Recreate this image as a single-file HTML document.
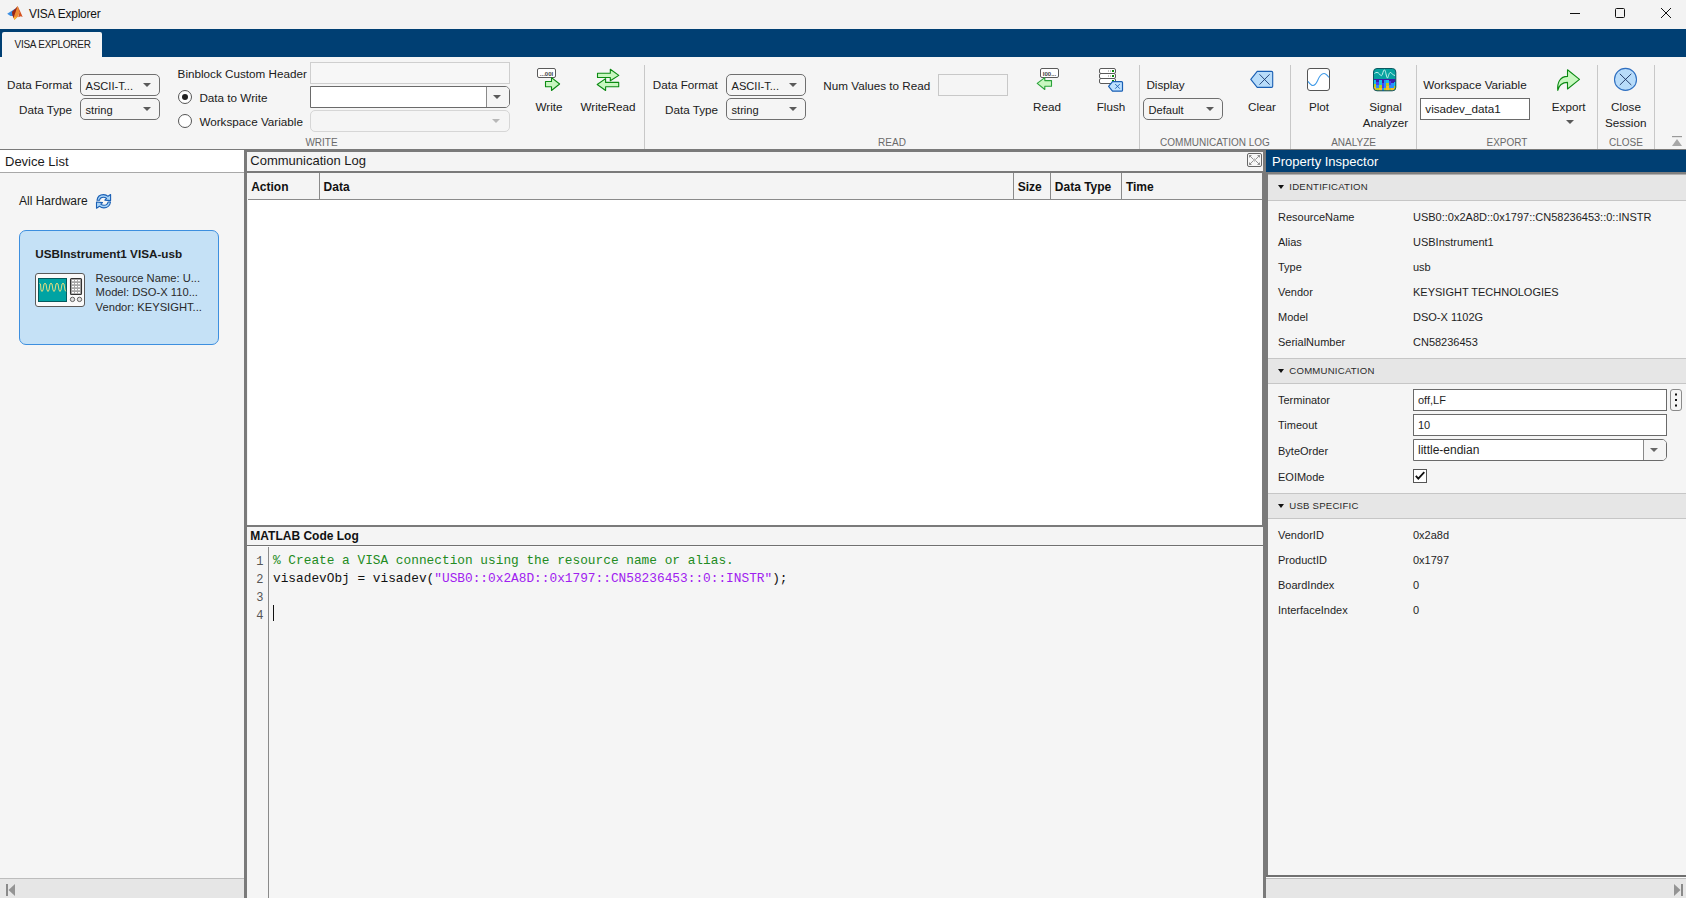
<!DOCTYPE html>
<html><head><meta charset="utf-8">
<style>
*{box-sizing:border-box;margin:0;padding:0}
html,body{width:1686px;height:898px;overflow:hidden;background:#f5f5f5;font-family:"Liberation Sans",sans-serif;color:#1a1a1a}
.a{position:absolute}
.t{position:absolute;white-space:nowrap;line-height:1}
.lbl{font-size:11.7px;color:#202020}
.sec{font-size:10px;color:#6a6a6a;letter-spacing:0}
.dd{position:absolute;height:22px;border:1px solid #6f6f6f;border-radius:5px;background:#f5f5f5}
.dd .v{position:absolute;left:4.5px;top:5.7px;font-size:11.1px;line-height:1;color:#202020;white-space:nowrap}
.arr{position:absolute;width:0;height:0;border-left:4px solid transparent;border-right:4px solid transparent;border-top:4px solid #5a5a5a}
.sep{position:absolute;top:65px;height:84px;width:1px;background:#c8c8c8}
.pil{position:absolute;left:1278px;font-size:11px;color:#1e1e1e;white-space:nowrap;line-height:1}
.piv{position:absolute;left:1413px;font-size:11px;color:#1e1e1e;white-space:nowrap;line-height:1}
.sech{position:absolute;left:1268px;width:418px;height:26px;background:#e6e6e6;border-top:1px solid #c6c6c6;border-bottom:1px solid #c6c6c6}
.sech .tri{position:absolute;left:9.6px;top:9.8px;width:0;height:0;border-left:3.8px solid transparent;border-right:3.8px solid transparent;border-top:4.6px solid #111}
.sech .st{position:absolute;left:21.3px;top:7.2px;font-size:9.6px;letter-spacing:0.22px;color:#2a2a2a;white-space:nowrap;line-height:1}
.code{position:absolute;left:273px;font-family:"Liberation Mono",monospace;font-size:12.8px;white-space:pre;line-height:1;color:#111}
.ln{position:absolute;left:249px;width:14.5px;text-align:right;font-family:"Liberation Mono",monospace;font-size:12px;line-height:1;color:#555}
</style></head><body>

<!-- TITLE BAR -->
<div class="a" style="left:0;top:0;width:1686px;height:29px;background:#f3f3f3"></div>
<div class="t" style="left:29px;top:8.6px;font-size:11.9px;letter-spacing:-0.2px;color:#111">VISA Explorer</div>

<!-- TAB BAR -->
<div class="a" style="left:0;top:29px;width:1686px;height:28px;background:#003f73"></div>
<div class="a" style="left:2px;top:32px;width:100px;height:25px;background:#f5f5f5;border-radius:2px 2px 0 0"></div>
<div class="t" style="left:14.5px;top:40px;font-size:10px;letter-spacing:-0.25px;color:#202020">VISA EXPLORER</div>


<!-- RIBBON CONTENT -->
<!-- title icon + controls -->
<svg class="a" style="left:0;top:0" width="30" height="29" viewBox="0 0 30 29">
 <path d="M7.2,13.8 L11.5,11 L15.8,8.2 L13.2,16 L10.5,16 Z" fill="#3a8ee2"/>
 <path d="M12,11.8 L15.8,8.2 L17.6,6 L16.8,10.5 L14.8,16 L13.6,18.5 L12.3,15 Z" fill="#9b2614"/>
 <path d="M17.6,6 L18.8,9 L19.5,13 L17.8,16.8 L14.4,19.9 L13.6,17.5 L15.6,12 Z" fill="#ec8a34"/>
 <path d="M17.6,6 L20.5,12 L22.7,17 L20.8,16.3 L18.2,17.3 L19.4,12.5 Z" fill="#d5521f"/>
 <path d="M13.8,17.2 L16.8,16.8 L14.4,19.9 Z" fill="#f9b92c"/>
</svg>
<div class="a" style="left:1570px;top:13px;width:10px;height:1px;background:#111"></div>
<div class="a" style="left:1615px;top:8px;width:10px;height:10px;border:1px solid #111;border-radius:1.5px"></div>
<svg class="a" style="left:1660px;top:7px" width="12" height="12" viewBox="0 0 12 12"><path d="M1,1 L11,11 M11,1 L1,11" stroke="#111" stroke-width="1"/></svg>

<!-- WRITE section -->
<div class="t lbl" style="left:7px;top:79.3px">Data Format</div>
<div class="t lbl" style="left:0;width:72px;text-align:right;top:103.8px">Data Type</div>
<div class="dd" style="left:80px;top:74px;width:80px"><span class="v">ASCII-T...</span><i class="arr" style="left:62px;top:8.3px"></i></div>
<div class="dd" style="left:80px;top:98px;width:80px"><span class="v">string</span><i class="arr" style="left:62px;top:8.3px"></i></div>

<div class="t lbl" style="left:177.6px;top:68.1px">Binblock Custom Header</div>
<div class="a" style="left:310px;top:62px;width:200px;height:22px;border:1px solid #cfcfcf;background:#f7f7f7"></div>
<div class="a" style="left:178px;top:90px;width:14px;height:14px;border:1px solid #555;border-radius:50%;background:#fff"></div>
<div class="a" style="left:182px;top:94px;width:6px;height:6px;border-radius:50%;background:#222"></div>
<div class="t lbl" style="left:199.4px;top:92.1px">Data to Write</div>
<div class="a" style="left:310px;top:86px;width:200px;height:22px;border:1px solid #6a6a6a;border-radius:0 5px 5px 0;background:#fff"></div>
<div class="a" style="left:486px;top:87px;width:23px;height:20px;border-left:1px solid #8a8a8a;border-radius:0 4px 4px 0;background:#f5f5f5"></div>
<i class="arr" style="left:493px;top:95px"></i>
<div class="a" style="left:178px;top:114px;width:14px;height:14px;border:1px solid #555;border-radius:50%;background:#fff"></div>
<div class="t lbl" style="left:199.4px;top:116.1px">Workspace Variable</div>
<div class="a" style="left:310px;top:110px;width:200px;height:22px;border:1px solid #d6d6d6;border-radius:5px;background:#f5f5f5"></div>
<i class="arr" style="left:492px;top:119px;border-top-color:#b8b8b8"></i>
<div class="t sec" style="left:221.5px;width:200px;text-align:center;top:138.2px">WRITE</div>

<svg class="a" style="left:530px;top:62px" width="40" height="32" viewBox="530 62 40 32">
 <rect x="537.5" y="68.5" width="18" height="9" rx="1.5" fill="#fff" stroke="#5a5a5a" stroke-width="1"/>
 <text x="546.5" y="75.8" font-family="Liberation Sans" font-size="6" font-weight="700" text-anchor="middle" fill="#444">...00I</text>
 <path d="M545.5,81.5 L551.5,81.5 L551.5,77.6 L559.6,84 L551.5,90.5 L551.5,86.7 L545.5,86.7 Z" fill="#c8f7c0" stroke="#0b8a12" stroke-width="1.1" stroke-linejoin="round"/>
</svg>
<div class="t lbl" style="left:499px;width:100px;text-align:center;top:100.9px">Write</div>
<svg class="a" style="left:592px;top:62px" width="32" height="32" viewBox="592 62 32 32">
 <path d="M597.5,73.2 L610.3,73.2 L610.3,69.2 L618.8,75.4 L610.3,80.8 L610.3,77.5 L597.5,77.5 Z" fill="#c8f7c0" stroke="#0b8a12" stroke-width="1.1" stroke-linejoin="round"/>
 <path d="M618.7,82.4 L605.6,82.4 L605.6,78.6 L597.2,84.5 L605.6,90.5 L605.6,86.7 L618.7,86.7 Z" fill="#c8f7c0" stroke="#0b8a12" stroke-width="1.1" stroke-linejoin="round"/>
</svg>
<div class="t lbl" style="left:558px;width:100px;text-align:center;top:100.9px">WriteRead</div>
<div class="sep" style="left:644px"></div>

<!-- READ section -->
<div class="t lbl" style="left:652.8px;top:79.3px">Data Format</div>
<div class="t lbl" style="left:618px;width:100px;text-align:right;top:103.8px">Data Type</div>
<div class="dd" style="left:726px;top:74px;width:80px"><span class="v">ASCII-T...</span><i class="arr" style="left:62px;top:8.3px"></i></div>
<div class="dd" style="left:726px;top:98px;width:80px"><span class="v">string</span><i class="arr" style="left:62px;top:8.3px"></i></div>
<div class="t lbl" style="left:823.3px;top:80.1px">Num Values to Read</div>
<div class="a" style="left:938px;top:74px;width:70px;height:22px;border:1px solid #c8c8c8;background:#f5f5f5"></div>
<div class="t sec" style="left:792.0px;width:200px;text-align:center;top:138.2px">READ</div>
<svg class="a" style="left:1032px;top:62px" width="32" height="32" viewBox="1032 62 32 32">
 <rect x="1040.5" y="68.5" width="18" height="9" rx="1.5" fill="#fff" stroke="#5a5a5a" stroke-width="1"/>
 <text x="1049.5" y="75.8" font-family="Liberation Sans" font-size="6" font-weight="700" text-anchor="middle" fill="#444">I00...</text>
 <path d="M1051.5,80.6 L1044.8,80.6 L1044.8,77.6 L1037.2,83.4 L1044.8,89.5 L1044.8,86.2 L1051.5,86.2 Z" fill="#c8f7c0" stroke="#2aa33a" stroke-width="1.1" stroke-linejoin="round"/>
</svg>
<div class="t lbl" style="left:997px;width:100px;text-align:center;top:100.9px">Read</div>
<svg class="a" style="left:1095px;top:62px" width="32" height="32" viewBox="1095 62 32 32">
 <rect x="1099.5" y="68.5" width="16" height="5" rx="1.5" fill="#fff" stroke="#5a5a5a"/>
 <rect x="1099.5" y="73.5" width="16" height="5" rx="1.5" fill="#fff" stroke="#5a5a5a"/>
 <rect x="1099.5" y="78.5" width="16" height="5" rx="1.5" fill="#fff" stroke="#5a5a5a"/>
 <rect x="1112" y="70" width="2" height="2" fill="#0a8a0a"/><rect x="1112" y="75" width="2" height="2" fill="#0a8a0a"/><rect x="1112" y="80" width="2" height="2" fill="#0a8a0a"/>
 <rect x="1108" y="70.5" width="1" height="1" fill="#888"/><rect x="1110" y="70.5" width="1" height="1" fill="#888"/>
 <rect x="1108" y="75.5" width="1" height="1" fill="#888"/><rect x="1110" y="75.5" width="1" height="1" fill="#888"/>
 <path d="M1108.6,86.4 L1112.5,81.6 L1121.5,81.6 Q1122.5,81.6 1122.5,82.6 L1122.5,90.2 Q1122.5,91.2 1121.5,91.2 L1112.5,91.2 Z" fill="#bde0ff" stroke="#1a5fb4" stroke-width="1.2" stroke-linejoin="round"/>
 <path d="M1115.2,84 L1119.8,88.7 M1119.8,84 L1115.2,88.7" stroke="#1a5fb4" stroke-width="0.9"/>
</svg>
<div class="t lbl" style="left:1061px;width:100px;text-align:center;top:100.9px">Flush</div>
<div class="sep" style="left:1139px"></div>

<!-- COMM LOG section -->
<div class="t lbl" style="left:1146.4px;top:79.3px">Display</div>
<div class="dd" style="left:1143px;top:98px;width:80px"><span class="v">Default</span><i class="arr" style="left:62px;top:8.3px"></i></div>
<svg class="a" style="left:1246px;top:64px" width="32" height="30" viewBox="1246 64 32 30">
 <path d="M1250.8,79.4 L1257.2,71.4 L1271.5,71.4 Q1272.7,71.4 1272.7,72.6 L1272.7,86.2 Q1272.7,87.4 1271.5,87.4 L1257.2,87.4 Z" fill="#b8dcfa" stroke="#1a5fb4" stroke-width="1.1" stroke-linejoin="round"/>
 <path d="M1259.5,74.3 L1269.6,84.6 M1269.6,74.3 L1259.5,84.6" stroke="#1a3a70" stroke-width="0.9"/>
</svg>
<div class="t lbl" style="left:1212px;width:100px;text-align:center;top:101.1px">Clear</div>
<div class="t sec" style="left:1115.0px;width:200px;text-align:center;top:138.2px">COMMUNICATION LOG</div>
<div class="sep" style="left:1290px"></div>

<!-- ANALYZE -->
<svg class="a" style="left:1302px;top:64px" width="32" height="30" viewBox="1302 64 32 30">
 <rect x="1307.5" y="68.5" width="22" height="22" rx="2.5" fill="#fff" stroke="#555" stroke-width="1"/>
 <path d="M1308,81.3 C1310,84 1311.5,85.5 1313,85.5 C1315,85.5 1316.5,83 1317.5,80.8 C1319,77 1321,73.5 1324,73.5 C1326,73.5 1327.5,75.5 1329,77.5" fill="none" stroke="#3f9ae8" stroke-width="1.1"/>
</svg>
<div class="t lbl" style="left:1269px;width:100px;text-align:center;top:101.1px">Plot</div>
<svg class="a" style="left:1368px;top:64px" width="32" height="30" viewBox="1368 64 32 30">
 <defs><clipPath id="sa"><rect x="1373.5" y="68.5" width="22.3" height="22.3" rx="3.5"/></clipPath></defs>
 <g clip-path="url(#sa)">
  <rect x="1373" y="68" width="23" height="11" fill="#06a3a0"/>
  <rect x="1373" y="79" width="23" height="12" fill="#3a1ea8"/>
  <rect x="1374" y="80" width="2" height="4" fill="#16c2e6"/><rect x="1374" y="84" width="2" height="3" fill="#b6cf1e"/><rect x="1374" y="87" width="2" height="4" fill="#fbb72a"/>
  <rect x="1376" y="82" width="3" height="3" fill="#4b3cf0"/><rect x="1376" y="85" width="3" height="3" fill="#2a8cff"/><rect x="1376" y="88" width="3" height="3" fill="#b6cf1e"/>
  <rect x="1379" y="80" width="3" height="5" fill="#16c2e6"/><rect x="1379" y="85" width="3" height="3" fill="#b6cf1e"/><rect x="1379" y="88" width="3" height="3" fill="#fbb72a"/>
  <rect x="1382" y="83" width="2" height="5" fill="#4b3cf0"/><rect x="1382" y="88" width="2" height="3" fill="#2a8cff"/>
  <rect x="1384" y="80" width="2" height="8" fill="#2a8cff"/><rect x="1384" y="88" width="2" height="3" fill="#b6cf1e"/>
  <rect x="1386" y="80" width="3" height="3" fill="#16c2e6"/><rect x="1386" y="83" width="3" height="3" fill="#b6cf1e"/><rect x="1386" y="86" width="3" height="5" fill="#fbb72a"/>
  <rect x="1389" y="81" width="2" height="4" fill="#4b3cf0"/><rect x="1389" y="85" width="2" height="3" fill="#2a8cff"/><rect x="1389" y="88" width="2" height="3" fill="#b6cf1e"/>
  <rect x="1391" y="83" width="3" height="5" fill="#2a8cff"/><rect x="1391" y="88" width="3" height="3" fill="#fbb72a"/>
  <rect x="1394" y="82" width="2" height="4" fill="#16c2e6"/><rect x="1394" y="86" width="2" height="5" fill="#b6cf1e"/>
  <path d="M1374.5,73.5 C1376,72 1378,72 1379.5,74 C1381,76 1381.5,76.5 1382.5,74 C1383.5,70.5 1384,69 1385,70.5 C1386,72.5 1386.5,78 1387.5,78 C1388.5,77 1389,72 1390.5,72.5 C1392,73.5 1393,75 1395,75.5" fill="none" stroke="#d8fbf5" stroke-width="0.9"/>
 </g>
 <rect x="1373.5" y="68.5" width="22.3" height="22.3" rx="3.5" fill="none" stroke="#0b5860" stroke-width="1"/>
</svg>
<div class="t lbl" style="left:1335.5px;width:100px;text-align:center;top:101.1px">Signal</div>
<div class="t lbl" style="left:1335.5px;width:100px;text-align:center;top:117.1px">Analyzer</div>
<div class="t sec" style="left:1253.6px;width:200px;text-align:center;top:138.2px">ANALYZE</div>
<div class="sep" style="left:1416px"></div>

<!-- EXPORT -->
<div class="t lbl" style="left:1423.2px;top:79.3px">Workspace Variable</div>
<div class="a" style="left:1420px;top:98px;width:110px;height:22px;border:1px solid #6a6a6a;background:#fff"></div>
<div class="t lbl" style="left:1425.3px;top:103.3px">visadev_data1</div>
<svg class="a" style="left:1552px;top:64px" width="32" height="30" viewBox="1552 64 32 30">
 <path d="M1567.5,69.8 L1579.5,79.4 L1567.5,89 L1567.5,82.4 C1562.5,82.4 1559,84.8 1557.8,90.5 C1557,82.5 1560,76.4 1567.5,76.4 Z" fill="#c8f7c0" stroke="#0b8a12" stroke-width="1.1" stroke-linejoin="round"/>
</svg>
<div class="t lbl" style="left:1518.7px;width:100px;text-align:center;top:101.1px">Export</div>
<i class="arr" style="left:1566px;top:119.5px;border-left-width:4.5px;border-right-width:4.5px;border-top-width:4.5px"></i>
<div class="t sec" style="left:1407.0px;width:200px;text-align:center;top:138.2px">EXPORT</div>
<div class="sep" style="left:1597px"></div>

<!-- CLOSE -->
<svg class="a" style="left:1610px;top:64px" width="32" height="30" viewBox="1610 64 32 30">
 <circle cx="1625.5" cy="79.4" r="11" fill="#b8dcfa" stroke="#2f6fc0" stroke-width="1.1"/>
 <path d="M1619.8,73.8 L1631.3,85 M1631.3,73.8 L1619.8,85" stroke="#1a3060" stroke-width="0.9"/>
</svg>
<div class="t lbl" style="left:1576px;width:100px;text-align:center;top:101.1px">Close</div>
<div class="t lbl" style="left:1575.7px;width:100px;text-align:center;top:117.1px">Session</div>
<div class="t sec" style="left:1526.0px;width:200px;text-align:center;top:138.2px">CLOSE</div>
<div class="sep" style="left:1654px"></div>
<svg class="a" style="left:1670px;top:134px" width="14" height="14" viewBox="0 0 14 14"><rect x="2" y="2" width="10" height="1.2" fill="#9a9a9a"/><path d="M2,12 L7,5 L12,12 Z" fill="#a8a8a8"/></svg>

<!-- RIBBON bottom border -->
<div class="a" style="left:0;top:149px;width:1686px;height:1px;background:#7a7a7a"></div>

<!-- MAIN: device list -->
<div class="a" style="left:0;top:150px;width:244px;height:22px;background:#fff"></div>
<div class="a" style="left:0;top:172px;width:244px;height:1px;background:#a8a8a8"></div>
<div class="t" style="left:5px;top:155px;font-size:13px;color:#1a1a1a">Device List</div>
<div class="a" style="left:0;top:878px;width:244px;height:1px;background:#bdbdbd"></div>
<div class="a" style="left:0;top:879px;width:244px;height:19px;background:#e6e6e6"></div>
<div class="a" style="left:244px;top:150px;width:3px;height:748px;background:#7a7a7a"></div>

<!-- center -->
<div class="a" style="left:247px;top:149px;width:1019px;height:3px;background:#7a7a7a"></div>
<div class="a" style="left:247px;top:152px;width:1016px;height:19px;background:#f4f4f4"></div>
<div class="a" style="left:247px;top:171px;width:1016px;height:2px;background:#7a7a7a"></div>
<div class="a" style="left:248px;top:173px;width:1015px;height:26px;background:#f4f4f4"></div>
<div class="a" style="left:248px;top:199px;width:1015px;height:1px;background:#8a8a8a"></div>
<div class="a" style="left:248px;top:200px;width:1014px;height:325px;background:#fff"></div><div class="a" style="left:1262px;top:173px;width:1px;height:352px;background:#7a7a7a"></div>
<div class="a" style="left:247px;top:525px;width:1016px;height:2px;background:#7a7a7a"></div>
<div class="a" style="left:247px;top:527px;width:1016px;height:18px;background:#f4f4f4"></div>
<div class="a" style="left:247px;top:545px;width:1016px;height:1px;background:#707070"></div><div class="a" style="left:247px;top:546px;width:1016px;height:1px;background:#fafafa"></div>
<div class="a" style="left:247px;top:547px;width:1016px;height:351px;background:#f5f5f5"></div>
<div class="a" style="left:268px;top:547px;width:1px;height:351px;background:#8a8a8a"></div>
<div class="a" style="left:1263px;top:150px;width:3px;height:748px;background:#7a7a7a"></div>

<!-- PI -->
<div class="a" style="left:1266px;top:150px;width:420px;height:22px;background:#003f73"></div>
<div class="t" style="left:1272px;top:154.6px;font-size:13px;color:#fff">Property Inspector</div>
<div class="a" style="left:1266px;top:172px;width:420px;height:2px;background:#7f7f7f"></div>
<div class="a" style="left:1266px;top:174px;width:420px;height:1px;background:#b0b0b0"></div>
<div class="a" style="left:1266px;top:172px;width:2px;height:705px;background:#7a7a7a"></div>
<div class="a" style="left:1266px;top:875px;width:420px;height:2px;background:#707070"></div><div class="a" style="left:1266px;top:877px;width:420px;height:1px;background:#fafafa"></div>
<div class="a" style="left:1266px;top:878px;width:420px;height:1px;background:#bdbdbd"></div>
<div class="a" style="left:1266px;top:879px;width:420px;height:19px;background:#e6e6e6"></div>


<!-- DEVICE LIST CONTENT -->
<div class="t" style="left:19px;top:194.5px;font-size:12px;color:#1a1a1a">All Hardware</div>
<svg class="a" style="left:92px;top:190px" width="24" height="22" viewBox="92 190 24 22">
 <path d="M97,200.3 C97.5,196.5 100.5,194.6 103.5,194.6 C105.5,194.6 107,195.3 108,196.3 L110.6,194.5 L110.6,200.6 L104.8,200.1 L106.6,198.4 C105.8,197.7 104.8,197.3 103.5,197.3 C101.3,197.3 99.8,198.6 99.5,200.3 Z" fill="#a9d4f7" stroke="#1a5fb4" stroke-width="1.1" stroke-linejoin="round"/>
 <path d="M110.5,202 C110,205.8 107,207.9 104,207.9 C102,207.9 100.5,207.2 99.5,206.2 L96.5,208.2 L96.5,202 L102.5,202.6 L100.8,204.2 C101.6,204.9 102.7,205.3 104,205.3 C106.2,205.3 107.7,204 108,202 Z" fill="#a9d4f7" stroke="#1a5fb4" stroke-width="1.1" stroke-linejoin="round"/>
</svg>
<div class="a" style="left:19px;top:230px;width:200px;height:115px;border:1px solid #3d8fdf;border-radius:7px;background:#c5e1f6"></div>
<div class="t" style="left:35.3px;top:248.2px;font-size:11.7px;font-weight:700;color:#1a1a1a">USBInstrument1 VISA-usb</div>
<svg class="a" style="left:34px;top:272px" width="52" height="36" viewBox="34 272 52 36">
 <rect x="35.5" y="273.5" width="49" height="33" rx="2.5" fill="#fafafa" stroke="#5a5a5a" stroke-width="1"/>
 <rect x="38.5" y="278.5" width="28" height="23" fill="#00a3a3" stroke="#055a5e" stroke-width="1"/>
 <path d="M39.5,283.5 L40.5,284 L41,290 L42,291.5 L43,290 L44,284 L45,283.3 L46,284 L47,290 L48,291.5 L49,290 L50,284 L51,283.3 L52,284 L53,290 L54,291.5 L55,290 L56,284 L57,283.3 L58,284 L59,290 L60,291.5 L61,290 L62,284 L63,283.3 L64,284 L65,290 L65.8,291.4" fill="none" stroke="#ffe27a" stroke-width="0.9"/>
 <rect x="70.5" y="278.5" width="11" height="16" rx="1" fill="#a8a8a8" stroke="#333" stroke-width="1.1"/>
 <g fill="#fff"><rect x="72" y="280" width="2" height="1.2"/><rect x="75" y="280" width="2" height="1.2"/><rect x="78" y="280" width="2" height="1.2"/>
 <rect x="72" y="283" width="2" height="1.2"/><rect x="75" y="283" width="2" height="1.2"/><rect x="78" y="283" width="2" height="1.2"/>
 <rect x="72" y="286" width="2" height="1.2"/><rect x="75" y="286" width="2" height="1.2"/><rect x="78" y="286" width="2" height="1.2"/>
 <rect x="72" y="289" width="2" height="1.2"/><rect x="75" y="289" width="2" height="1.2"/><rect x="78" y="289" width="2" height="1.2"/>
 <rect x="72" y="292" width="2" height="1.2"/><rect x="75" y="292" width="2" height="1.2"/><rect x="78" y="292" width="2" height="1.2"/></g>
 <circle cx="72.5" cy="299.4" r="2.2" fill="#ddd" stroke="#555" stroke-width="0.9"/>
 <circle cx="79.5" cy="299.4" r="2.2" fill="#ddd" stroke="#555" stroke-width="0.9"/>
</svg>
<div class="t" style="left:95.6px;top:272.6px;font-size:11.2px;color:#2a2a2a">Resource Name: U...</div>
<div class="t" style="left:95.6px;top:287.3px;font-size:11.2px;color:#2a2a2a">Model: DSO-X 110...</div>
<div class="t" style="left:95.6px;top:301.9px;font-size:11.2px;color:#2a2a2a">Vendor: KEYSIGHT...</div>
<svg class="a" style="left:4px;top:882px" width="14" height="16" viewBox="0 0 14 16"><rect x="2" y="2" width="2" height="12" fill="#8a8a8a"/><path d="M11,2 L4.5,8 L11,14 Z" fill="#949494"/></svg>

<!-- COMM LOG CONTENT -->
<div class="t" style="left:250.3px;top:153.5px;font-size:13px;color:#1a1a1a">Communication Log</div>
<svg class="a" style="left:1246px;top:152px" width="16" height="16" viewBox="1246 152 16 16">
 <rect x="1247.5" y="153.5" width="14" height="13" rx="1.5" fill="#f7f7f7" stroke="#666" stroke-width="1"/>
 <path d="M1249.5,155.5 L1253,159 M1249.5,155.5 L1249.5,157.5 M1249.5,155.5 L1251.5,155.5 M1259.5,155.5 L1256,159 M1259.5,155.5 L1257.5,155.5 M1259.5,155.5 L1259.5,157.5 M1249.5,164.5 L1253,161 M1249.5,164.5 L1249.5,162.5 M1249.5,164.5 L1251.5,164.5 M1259.5,164.5 L1256,161 M1259.5,164.5 L1257.5,164.5 M1259.5,164.5 L1259.5,162.5" stroke="#777" stroke-width="0.8" fill="none"/>
 <circle cx="1254.5" cy="160" r="1" fill="none" stroke="#777" stroke-width="0.7"/>
</svg>
<div class="a" style="left:319px;top:173px;width:1px;height:26px;background:#8a8a8a"></div>
<div class="a" style="left:1013px;top:173px;width:1px;height:26px;background:#8a8a8a"></div>
<div class="a" style="left:1050px;top:173px;width:1px;height:26px;background:#8a8a8a"></div>
<div class="a" style="left:1121px;top:173px;width:1px;height:26px;background:#8a8a8a"></div>
<div class="t" style="left:251.2px;top:181px;font-size:12px;font-weight:700;color:#111">Action</div>
<div class="t" style="left:323.6px;top:181px;font-size:12px;font-weight:700;color:#111">Data</div>
<div class="t" style="left:1017.7px;top:181px;font-size:12px;font-weight:700;color:#111">Size</div>
<div class="t" style="left:1054.8px;top:181px;font-size:12px;font-weight:700;color:#111">Data Type</div>
<div class="t" style="left:1125.9px;top:181px;font-size:12px;font-weight:700;color:#111">Time</div>

<!-- CODE LOG -->
<div class="t" style="left:250.3px;top:529.7px;font-size:12px;font-weight:700;color:#111">MATLAB Code Log</div>
<div class="ln" style="top:556.1px">1</div>
<div class="ln" style="top:574.1px">2</div>
<div class="ln" style="top:592.1px">3</div>
<div class="ln" style="top:610.1px">4</div>
<div class="code" style="top:554.9px;color:#228b22">% Create a VISA connection using the resource name or alias.</div>
<div class="code" style="top:572.9px">visadevObj = visadev(<span style="color:#a020f0">"USB0::0x2A8D::0x1797::CN58236453::0::INSTR"</span>);</div>
<div class="a" style="left:273px;top:605px;width:1px;height:16px;background:#111"></div>

<!-- PI CONTENT -->
<div class="sech" style="top:174px;height:27px;border-top-color:#b0b0b0"><i class="tri"></i><span class="st">IDENTIFICATION</span></div>
<div class="pil" style="top:211.7px">ResourceName</div><div class="piv" style="top:211.7px">USB0::0x2A8D::0x1797::CN58236453::0::INSTR</div>
<div class="pil" style="top:236.7px">Alias</div><div class="piv" style="top:236.7px">USBInstrument1</div>
<div class="pil" style="top:261.7px">Type</div><div class="piv" style="top:261.7px">usb</div>
<div class="pil" style="top:286.7px">Vendor</div><div class="piv" style="top:286.7px">KEYSIGHT TECHNOLOGIES</div>
<div class="pil" style="top:311.7px">Model</div><div class="piv" style="top:311.7px">DSO-X 1102G</div>
<div class="pil" style="top:336.7px">SerialNumber</div><div class="piv" style="top:336.7px">CN58236453</div>

<div class="sech" style="top:358px"><i class="tri"></i><span class="st">COMMUNICATION</span></div>
<div class="pil" style="top:394.7px">Terminator</div>
<div class="a" style="left:1413px;top:389px;width:254px;height:22px;border:1px solid #6a6a6a;background:#fff"></div>
<div class="piv" style="left:1418px;top:394.7px">off,LF</div>
<svg class="a" style="left:1670px;top:389px" width="12" height="22" viewBox="0 0 12 22"><rect x="0.5" y="0.5" width="11" height="21" rx="2.5" fill="#f5f5f5" stroke="#8a8a8a"/><rect x="5" y="4.5" width="2" height="2" fill="#111"/><rect x="5" y="10" width="2" height="2" fill="#111"/><rect x="5" y="15.5" width="2" height="2" fill="#111"/></svg>
<div class="pil" style="top:419.7px">Timeout</div>
<div class="a" style="left:1413px;top:414px;width:254px;height:22px;border:1px solid #6a6a6a;background:#fff"></div>
<div class="piv" style="left:1418px;top:419.7px">10</div>
<div class="pil" style="top:445.7px">ByteOrder</div>
<div class="a" style="left:1413px;top:439px;width:254px;height:22px;border:1px solid #6a6a6a;border-radius:0 5px 5px 0;background:#fff"></div>
<div class="a" style="left:1643px;top:440px;width:23px;height:20px;border-left:1px solid #8a8a8a;border-radius:0 4px 4px 0;background:#f5f5f5"></div>
<i class="arr" style="left:1650px;top:448px;border-left-width:4.5px;border-right-width:4.5px;border-top-width:4.5px;border-top-color:#666"></i>
<div class="piv" style="left:1418px;top:444.2px;font-size:12px">little-endian</div>
<div class="pil" style="top:471.7px">EOIMode</div>
<svg class="a" style="left:1412px;top:468px" width="16" height="16" viewBox="1412 468 16 16"><rect x="1413.5" y="469.5" width="13" height="13" fill="#fff" stroke="#555" stroke-width="1"/><path d="M1415.8,475.8 L1418.3,478.6 L1424.3,472.2" fill="none" stroke="#111" stroke-width="1.8"/></svg>

<div class="sech" style="top:493px"><i class="tri"></i><span class="st">USB SPECIFIC</span></div>
<div class="pil" style="top:529.7px">VendorID</div><div class="piv" style="top:529.7px">0x2a8d</div>
<div class="pil" style="top:554.7px">ProductID</div><div class="piv" style="top:554.7px">0x1797</div>
<div class="pil" style="top:579.7px">BoardIndex</div><div class="piv" style="top:579.7px">0</div>
<div class="pil" style="top:604.7px">InterfaceIndex</div><div class="piv" style="top:604.7px">0</div>
<svg class="a" style="left:1670px;top:882px" width="16" height="16" viewBox="0 0 16 16"><rect x="11" y="2" width="2" height="12" fill="#8a8a8a"/><path d="M4,2 L10.5,8 L4,14 Z" fill="#949494"/></svg>

</body></html>
